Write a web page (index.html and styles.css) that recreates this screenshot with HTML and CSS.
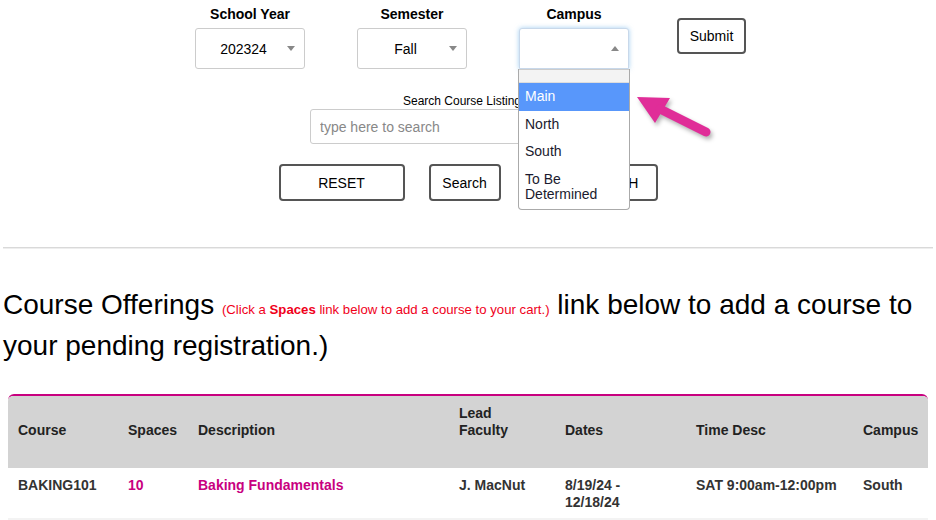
FILE: index.html
```html
<!DOCTYPE html>
<html lang="en">
<head>
  <meta charset="UTF-8">
  <meta name="viewport" content="width=device-width, initial-scale=1.0">
  <title>Course Offerings</title>
  <link rel="stylesheet" href="styles.css">
</head>
<body>
  <div class="page">
    <form class="filters">
      <div class="filter-row">
        <div class="field">
          <label>School Year</label>
          <div class="select"><span class="value">202324</span><span class="caret"></span></div>
        </div>
        <div class="field">
          <label>Semester</label>
          <div class="select"><span class="value">Fall</span><span class="caret"></span></div>
        </div>
        <div class="field">
          <label>Campus</label>
          <div class="select-wrap">
            <div class="select open"><span class="value"></span><span class="caret up"></span></div>
            <ul class="dropdown">
              <li class="dropdown-blank"></li>
              <li class="active">Main</li>
              <li>North</li>
              <li>South</li>
              <li class="last">To Be Determined</li>
            </ul>
          </div>
        </div>
        <button type="button" class="btn submit">Submit</button>
      </div>

      <div class="search">
        <label>Search Course Listings</label>
        <input type="text" placeholder="type here to search">
      </div>

      <div class="btn-row">
        <button type="button" class="btn reset">RESET</button>
        <button type="button" class="btn find">Search</button>
        <button type="button" class="btn new">NEW SEARCH</button>
      </div>
    </form>

    <hr class="divider">

    <h2 class="title">Course Offerings <span class="hint">(Click a <b>Spaces</b> link below to add a course to your cart.)</span> link below to add a course to your pending registration.)</h2>

    <table class="courses">
      <thead>
        <tr>
          <th class="c-course">Course</th>
          <th class="c-spaces">Spaces</th>
          <th class="c-desc">Description</th>
          <th class="c-faculty">Lead<br>Faculty</th>
          <th class="c-dates">Dates</th>
          <th class="c-time">Time Desc</th>
          <th class="c-campus">Campus</th>
        </tr>
      </thead>
      <tbody>
        <tr>
          <td>BAKING101</td>
          <td><a href="#" class="link">10</a></td>
          <td><a href="#" class="link">Baking Fundamentals</a></td>
          <td>J. MacNut</td>
          <td>8/19/24 - 12/18/24</td>
          <td>SAT 9:00am-12:00pm</td>
          <td>South</td>
        </tr>
        <tr class="next">
          <td colspan="7"></td>
        </tr>
      </tbody>
    </table>

    <svg class="arrow" width="90" height="60" viewBox="0 0 90 60">
      <polygon points="7,9 40,10 25,35" fill="#e02d98"/>
      <line x1="30" y1="21" x2="76" y2="44" stroke="#e02d98" stroke-width="9" stroke-linecap="round"/>
    </svg>
  </div>
</body>
</html>
```

FILE: styles.css
```css
body {
  margin: 0;
  font-family: "Liberation Sans", Arial, sans-serif;
  color: #000;
  background-color: #fff;
}

.page {
  position: relative;
  padding: 6px 3px 0;
}

/* filters */

.filter-row {
  display: flex;
  justify-content: center;
  align-items: flex-start;
  gap: 52px;
  padding-left: 5px;
}

.field {
  display: flex;
  flex-direction: column;
  align-items: center;
  width: 110px;
}

.field label {
  font-size: 14px;
  font-weight: bold;
  line-height: 16px;
  margin-bottom: 6px;
}

.select-wrap {
  position: relative;
  width: 110px;
}

.select {
  display: flex;
  align-items: center;
  box-sizing: border-box;
  width: 110px;
  height: 41px;
  padding: 0 9px 0 4px;
  border: 1px solid #ccc;
  border-radius: 3px;
  background-color: #fff;
  font-size: 14px;
}

.select .value {
  flex: 1;
  text-align: center;
}

.caret {
  width: 0;
  height: 0;
  border-left: 4px solid transparent;
  border-right: 4px solid transparent;
  border-top: 5px solid #888;
}

.caret.up {
  border-top: none;
  border-bottom: 5px solid #888;
}

.select.open {
  border-color: #c8d8ea;
  border-bottom-left-radius: 0;
  border-bottom-right-radius: 0;
  box-shadow: 0 0 5px rgba(102, 175, 233, 0.6);
}

.dropdown {
  position: absolute;
  top: 100%;
  left: -1px;
  z-index: 5;
  box-sizing: border-box;
  width: 112px;
  margin: 0;
  padding: 0;
  list-style: none;
  background-color: #fff;
  border: 1px solid #aaa;
  border-top: none;
  border-radius: 0 0 4px 4px;
  font-size: 14px;
}

.dropdown li {
  padding: 6px 6px;
  line-height: 15px;
  color: #1a1a2e;
}

.dropdown .dropdown-blank {
  height: 12px;
  padding: 0;
  background-color: #f3f3f3;
  border-top: 1px solid #ccc;
  border-bottom: 1px solid #ddd;
}

.dropdown li.active {
  background-color: #5897fb;
  color: #fff;
  padding-bottom: 7px;
}

.dropdown li.last {
  padding-top: 7px;
  padding-bottom: 7px;
}

.btn {
  background-color: #fff;
  color: #000;
  border: 2px solid #555;
  border-radius: 4px;
  font-family: "Liberation Sans", Arial, sans-serif;
  font-size: 14px;
  height: 37px;
  padding: 0;
  cursor: pointer;
}

.submit {
  width: 69px;
  height: 36px;
  margin-top: 12px;
  margin-left: -4px;
}

.search {
  display: flex;
  flex-direction: column;
  align-items: center;
  margin-top: 25px;
}

.search label {
  font-size: 12px;
  line-height: 14px;
  margin-bottom: 1px;
  margin-right: 6px;
}

.search input {
  box-sizing: border-box;
  width: 316px;
  height: 35px;
  padding: 0 9px;
  border: 1px solid #ccc;
  border-radius: 3px;
  font-family: "Liberation Sans", Arial, sans-serif;
  font-size: 14px;
}

.search input::placeholder {
  color: #888;
}

.btn-row {
  display: flex;
  justify-content: center;
  gap: 24px;
  margin-top: 20px;
}

.reset {
  width: 126px;
}

.find {
  width: 72px;
}

.new {
  width: 133px;
}

.divider {
  margin: 46px 0 0;
  border: none;
  border-top: 1px solid #d9d9d9;
  border-bottom: 1px solid #eee;
}

/* heading */

.title {
  margin: 35px 0 0;
  font-size: 28px;
  font-weight: normal;
  line-height: 41px;
}

.hint {
  font-size: 13.2px;
  line-height: 1;
  color: #f0001a;
}

/* table */

.courses {
  width: 920px;
  margin: 28px 5px 0;
  border-collapse: separate;
  border-spacing: 0;
  border-top: 2px solid #c8007f;
  border-radius: 6px 6px 0 0;
  table-layout: fixed;
  font-size: 14px;
}

.courses th,
.courses td {
  box-sizing: border-box;
}

.courses th {
  background-color: #d3d3d3;
  color: #222;
  text-align: left;
  vertical-align: bottom;
  padding: 9px 10px 29px;
  line-height: 17px;
}

.courses th:first-child {
  border-top-left-radius: 5px;
}

.courses th:last-child {
  border-top-right-radius: 5px;
}

.courses td {
  vertical-align: top;
  padding: 9px 10px 7px;
  line-height: 17px;
  font-weight: bold;
  color: #333;
}

.courses tr.next td {
  background-color: #f3f3f3;
  height: 2px;
  padding: 0;
}

.link {
  color: #c8007f;
  text-decoration: none;
}

.c-course { width: 110px; }
.c-spaces { width: 70px; }
.c-desc { width: 261px; }
.c-faculty { width: 106px; }
.c-dates { width: 131px; }
.c-time { width: 167px; }
.c-campus { width: 75px; }

.arrow {
  position: absolute;
  left: 630px;
  top: 88px;
  filter: drop-shadow(2px 3px 2px rgba(0, 0, 0, 0.3));
}
```
